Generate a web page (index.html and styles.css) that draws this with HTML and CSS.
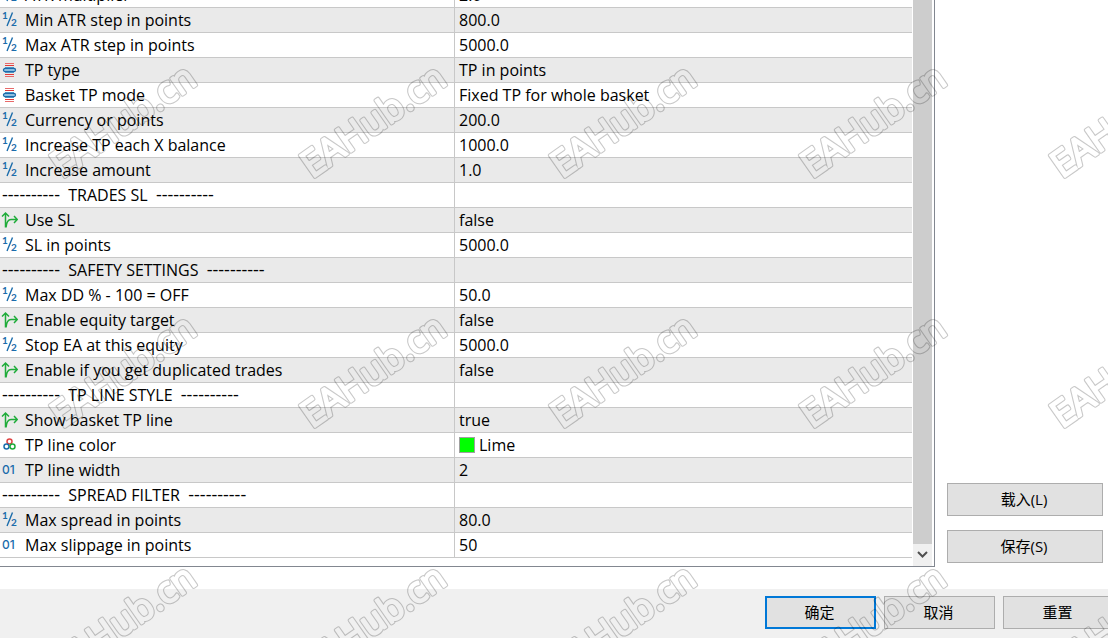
FILE: index.html
```html
<!DOCTYPE html>
<html lang="zh-CN">
<head>
    <meta charset="UTF-8">
    <meta name="viewport" content="width=device-width, initial-scale=1.0">
    <title>EA Inputs</title>
    <link rel="stylesheet" href="styles.css">
</head>
<body>
    <!-- icon set -->
    <svg class="defs" width="0" height="0">
        <symbol id="icon-double" viewBox="0 0 18 18">
            <text x="2" y="8" class="half">1</text>
            <path d="M12.500 1.500L7 15" stroke="#1b6cab" stroke-width="1.400" />
            <text x="11" y="15" class="half">2</text>
        </symbol>
        <symbol id="icon-int" viewBox="0 0 18 18">
            <text x="2" y="13" class="digits">01</text>
        </symbol>
        <symbol id="icon-enum" viewBox="0 0 18 18">
            <path d="M5 2.500h9M5 15.500h9" stroke="#e86a6a" />
            <path d="M5 4.500h9M5 13.500h9" stroke="#e03a3a" />
            <path d="M5 6.500h9M5 11.500h9" stroke="#5f9cc8" />
            <rect x="3.500" y="7.500" width="12" height="3" rx="1.500" fill="#b5daf2" stroke="#1b6cab" stroke-width="1.300" />
        </symbol>
        <symbol id="icon-bool" viewBox="0 0 18 18">
            <path d="M5.500 16.500V2M2 5.500L5.500 2L9 5.500M6 16.500C6.500 11 8 8.500 11 8.500H17M14 5L17.300 8.500L14 12" fill="none" stroke="#1fac3a" stroke-width="1.500" />
        </symbol>
        <symbol id="icon-color" viewBox="0 0 18 18">
            <g fill="#fff" stroke-width="1.500">
                <circle cx="9.500" cy="5.500" r="2.500" stroke="#e04444" />
                <circle cx="6.500" cy="10.500" r="2.500" stroke="#1b6cab" />
                <circle cx="12.500" cy="10.500" r="2.500" stroke="#1fac3a" />
            </g>
        </symbol>
    </svg>

    <div class="dialog">
        <main class="content">
            <div class="panel">
                <div class="list">
                    <table class="params">
                        <tr><td><svg class="icon"><use href="#icon-double" /></svg>ATR multiplier</td><td>2.0</td></tr>
                        <tr><td><svg class="icon"><use href="#icon-double" /></svg>Min ATR step in points</td><td>800.0</td></tr>
                        <tr><td><svg class="icon"><use href="#icon-double" /></svg>Max ATR step in points</td><td>5000.0</td></tr>
                        <tr><td><svg class="icon"><use href="#icon-enum" /></svg>TP type</td><td>TP in points</td></tr>
                        <tr><td><svg class="icon"><use href="#icon-enum" /></svg>Basket TP mode</td><td>Fixed TP for whole basket</td></tr>
                        <tr><td><svg class="icon"><use href="#icon-double" /></svg>Currency or points</td><td>200.0</td></tr>
                        <tr><td><svg class="icon"><use href="#icon-double" /></svg>Increase TP each X balance</td><td>1000.0</td></tr>
                        <tr><td><svg class="icon"><use href="#icon-double" /></svg>Increase amount</td><td>1.0</td></tr>
                        <tr><td class="group"><span class="dash">----------</span>  TRADES SL  <span class="dash">----------</span></td><td></td></tr>
                        <tr><td><svg class="icon"><use href="#icon-bool" /></svg>Use SL</td><td>false</td></tr>
                        <tr><td><svg class="icon"><use href="#icon-double" /></svg>SL in points</td><td>5000.0</td></tr>
                        <tr><td class="group"><span class="dash">----------</span>  SAFETY SETTINGS  <span class="dash">----------</span></td><td></td></tr>
                        <tr><td><svg class="icon"><use href="#icon-double" /></svg>Max DD % - 100 = OFF</td><td>50.0</td></tr>
                        <tr><td><svg class="icon"><use href="#icon-bool" /></svg>Enable equity target</td><td>false</td></tr>
                        <tr><td><svg class="icon"><use href="#icon-double" /></svg>Stop EA at this equity</td><td>5000.0</td></tr>
                        <tr><td><svg class="icon"><use href="#icon-bool" /></svg>Enable if you get duplicated trades</td><td>false</td></tr>
                        <tr><td class="group"><span class="dash">----------</span>  TP LINE STYLE  <span class="dash">----------</span></td><td></td></tr>
                        <tr><td><svg class="icon"><use href="#icon-bool" /></svg>Show basket TP line</td><td>true</td></tr>
                        <tr><td><svg class="icon"><use href="#icon-color" /></svg>TP line color</td><td><span class="swatch"></span>Lime</td></tr>
                        <tr><td><svg class="icon"><use href="#icon-int" /></svg>TP line width</td><td>2</td></tr>
                        <tr><td class="group"><span class="dash">----------</span>  SPREAD FILTER  <span class="dash">----------</span></td><td></td></tr>
                        <tr><td><svg class="icon"><use href="#icon-double" /></svg>Max spread in points</td><td>80.0</td></tr>
                        <tr><td><svg class="icon"><use href="#icon-int" /></svg>Max slippage in points</td><td>50</td></tr>
                    </table>
                </div>
                <div class="scrollbar">
                    <div class="thumb"></div>
                    <button class="scroll-down" aria-label="Scroll down">
                        <svg width="11" height="7" viewBox="0 0 11 7"><path d="M1 1L5.500 5.500L10 1" fill="none" stroke="#505050" stroke-width="2" /></svg>
                    </button>
                </div>
            </div>
            <div class="side">
                <button class="btn">载入(L)</button>
                <button class="btn">保存(S)</button>
            </div>
        </main>
        <footer class="footer">
            <button class="btn primary">确定</button>
            <button class="btn">取消</button>
            <button class="btn">重置</button>
        </footer>

        <!-- watermark tiles -->
        <svg class="watermark" width="100%" height="100%" aria-hidden="true">
            <defs>
                <mask id="outline" maskUnits="userSpaceOnUse" x="0" y="0" width="250" height="250">
                    <text class="mark mark-outer" transform="translate(62 179) rotate(-35)">EAHub.cn</text>
                    <text class="mark mark-inner" transform="translate(62 179) rotate(-35)">EAHub.cn</text>
                </mask>
                <pattern id="tile" width="250" height="250" patternUnits="userSpaceOnUse">
                    <rect width="250" height="250" fill="#000" fill-opacity="0.22" mask="url(#outline)" />
                </pattern>
            </defs>
            <rect width="100%" height="100%" fill="url(#tile)" />
        </svg>
    </div>
</body>
</html>
```

FILE: styles.css
```css
* {
    box-sizing: border-box;
}

body {
    margin: 0;
    font-family: "Open Sans", "Noto Sans CJK SC", sans-serif;
    font-size: 16px;
    color: #000;
    background-color: #fff;
}

.defs {
    position: absolute;
}

.dialog {
    position: relative;
    display: flex;
    flex-direction: column;
    height: 100vh;
    overflow: hidden;
}

.content {
    flex: 1;
    min-height: 0;
    display: flex;
    gap: 12px;
    padding: 0 5px 22px 0;
}

/* parameter list */
.panel {
    flex: 1;
    display: flex;
    border-right: 1px solid #828790;
    border-bottom: 1px solid #828790;
    padding-right: 2px;
    overflow: hidden;
}

/* scrolled to the last row */
.list {
    flex: 1;
    display: flex;
    flex-direction: column;
    justify-content: flex-end;
    padding-bottom: 8px;
}

.params {
    width: 100%;
    table-layout: fixed;
    border-collapse: separate;
    border-spacing: 0;
}

.params td {
    height: 25px;
    padding: 0 0 0 4px;
    border-bottom: 1px solid #c8c8c8;
    line-height: 24px;
    white-space: pre;
}

.params td:first-child {
    width: 455px;
    padding-left: 0;
    border-right: 1px solid #c8c8c8;
}

.params td.group:first-child {
    padding-left: 2px;
}

.params tr:nth-child(even) td {
    background-color: #eaeaea;
}

.icon {
    width: 18px;
    height: 18px;
    margin-right: 7px;
    vertical-align: -3px;
}

.half {
    font: 700 10px "Lato", sans-serif;
    fill: #1b6cab;
}

.digits {
    font: 500 12px "Inter", sans-serif;
    fill: #1b6cab;
}

.dash {
    font-size: 18px;
    line-height: 20px;
}

.swatch {
    display: inline-block;
    width: 16px;
    height: 16px;
    margin-right: 4px;
    border: 1px solid #a0a0a0;
    background-color: #00ff00;
    vertical-align: -2px;
}

.scrollbar {
    width: 19px;
    margin-left: 1px;
    display: flex;
    flex-direction: column;
    background-color: #f0f0f0;
}

.thumb {
    flex: 1;
    background-color: #cdcdcd;
}

.scroll-down {
    height: 22px;
    padding: 0 0 4px;
    border: none;
    background-color: #f0f0f0;
}

/* buttons */
.btn {
    height: 33px;
    padding: 0 2px 2px 0;
    border: 1px solid #adadad;
    background-color: #e1e1e1;
    color: #000;
    font-family: inherit;
    font-size: 15px;
}

.btn.primary {
    border: 2px solid #0078d7;
}

.side {
    width: 156px;
    display: flex;
    flex-direction: column;
    justify-content: flex-end;
    gap: 14px;
    padding-bottom: 4px;
}

.footer {
    display: flex;
    justify-content: flex-end;
    gap: 8px;
    height: 49px;
    padding-top: 7px;
    margin-right: -6px;
    background-color: #f0f0f0;
}

.footer .btn {
    width: 111px;
}

/* watermark */
.watermark {
    position: absolute;
    top: 0;
    left: 0;
    pointer-events: none;
}

.mark {
    font: 37px "Open Sans", sans-serif;
    stroke-linejoin: round;
}

.mark-outer {
    fill: #fff;
    stroke: #fff;
    stroke-width: 4px;
}

.mark-inner {
    fill: #000;
    stroke: #000;
    stroke-width: 2px;
}
```
